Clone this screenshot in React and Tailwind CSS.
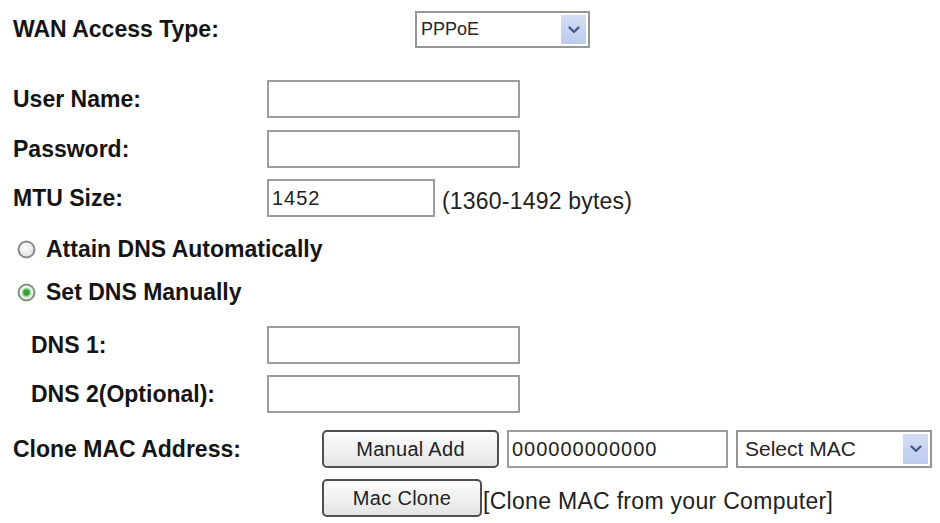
import React from 'react';

const Chevron = () => (
  <svg width="12" height="8" viewBox="0 0 12 8">
    <path d="M1.6 1.6 L6 6 L10.4 1.6" fill="none" stroke="#4a5e88" strokeWidth="2.4" strokeLinecap="round" strokeLinejoin="round" />
  </svg>
);

const FakeSelect = ({ value, className = '', textClass = '' }) => (
  <div className={`flex items-stretch border-2 border-[#959595] bg-white p-[2px] ${className}`}>
    <span className={`flex flex-1 items-center pl-[2px] text-[#262626] ${textClass}`}>{value}</span>
    <span className="flex w-[25px] items-center justify-center bg-gradient-to-b from-[#d3ddf4] to-[#bccbee]">
      <Chevron />
    </span>
  </div>
);

const TextBox = ({ value = '', width = 'w-[253px]', className = '' }) => (
  <input
    type="text"
    readOnly
    value={value}
    className={`h-[38px] ${width} border-2 border-[#9d9d9d] bg-white px-[3px] text-[20px] tracking-[1px] text-[#222] outline-none ${className}`}
  />
);

const Radio = ({ checked }) => (
  <svg width="19" height="19" viewBox="0 0 19 19" className="shrink-0">
    <defs>
      <radialGradient id={checked ? 'rOn' : 'rOff'} cx="40%" cy="35%" r="70%">
        <stop offset="0%" stopColor="#ffffff" />
        <stop offset="100%" stopColor={checked ? '#dce8db' : '#dcdcdc'} />
      </radialGradient>
    </defs>
    <circle cx="9.5" cy="9.5" r="8" fill={`url(#${checked ? 'rOn' : 'rOff'})`} stroke={checked ? '#7c957c' : '#8a8a8a'} strokeWidth="2" />
    {checked && (
      <>
        <circle cx="9.5" cy="9.5" r="4.8" fill="#a6d8a5" />
        <circle cx="9.5" cy="9.5" r="3.2" fill="#33a03d" />
      </>
    )}
  </svg>
);

const Button = ({ children, width }) => (
  <div className={`flex h-[38px] ${width} items-center justify-center rounded-[5px] border-2 border-[#4f4f4f] bg-gradient-to-b from-[#fdfdfd] to-[#e4e4e4] text-[20px] tracking-[0.3px] text-[#222]`}>
    {children}
  </div>
);

const Label = ({ children, className = '' }) => (
  <span className={`text-[23px] font-bold text-[#141414] ${className}`}>{children}</span>
);

export default function App() {
  return (
    <div className="min-h-[523px] w-[940px] bg-white pl-[13px] pt-[11px] font-['Liberation_Sans',Arial,sans-serif]">
      {/* WAN type */}
      <div className="flex h-[37px] items-center">
        <Label className="w-[402px]">WAN Access Type:</Label>
        <FakeSelect value="PPPoE" className="h-[37px] w-[175px]" textClass="text-[18px]" />
      </div>

      {/* PPPoE account */}
      <div className="mt-[32px] flex h-[38px] items-center">
        <Label className="w-[254px]">User Name:</Label>
        <TextBox />
      </div>
      <div className="mt-[12px] flex h-[38px] items-center">
        <Label className="w-[254px]">Password:</Label>
        <TextBox />
      </div>
      <div className="mt-[11px] flex h-[38px] items-center">
        <Label className="w-[254px]">MTU Size:</Label>
        <TextBox value="1452" width="w-[168px]" />
        <span className="ml-[7px] mt-[6px] text-[23px] tracking-[0.2px] text-[#222]">(1360-1492 bytes)</span>
      </div>

      {/* DNS mode */}
      <div className="mt-[17px] flex h-[30px] items-center pl-[4px]">
        <Radio checked={false} />
        <Label className="ml-[10px]">Attain DNS Automatically</Label>
      </div>
      <div className="mt-[13px] flex h-[30px] items-center pl-[4px]">
        <Radio checked />
        <Label className="ml-[10px]">Set DNS Manually</Label>
      </div>

      <div className="mt-[19px] flex h-[38px] items-center pl-[18px]">
        <Label className="w-[236px]">DNS 1:</Label>
        <TextBox />
      </div>
      <div className="mt-[11px] flex h-[38px] items-center pl-[18px]">
        <Label className="w-[236px]">DNS 2(Optional):</Label>
        <TextBox />
      </div>

      {/* MAC clone */}
      <div className="mt-[17px] flex h-[38px] items-center">
        <Label className="w-[309px]">Clone MAC Address:</Label>
        <Button width="w-[177px]">Manual Add</Button>
        <TextBox value="000000000000" width="w-[221px]" className="ml-[8px]" />
        <FakeSelect value="Select MAC" className="ml-[8px] h-[38px] w-[196px]" textClass="text-[21px] pl-[5px]" />
      </div>
      <div className="mt-[11px] flex h-[38px] items-center pl-[309px]">
        <Button width="w-[160px]">Mac Clone</Button>
        <span className="ml-[1px] mt-[6px] text-[23px] tracking-[0.3px] text-[#222]">[Clone MAC from your Computer]</span>
      </div>
    </div>
  );
}
